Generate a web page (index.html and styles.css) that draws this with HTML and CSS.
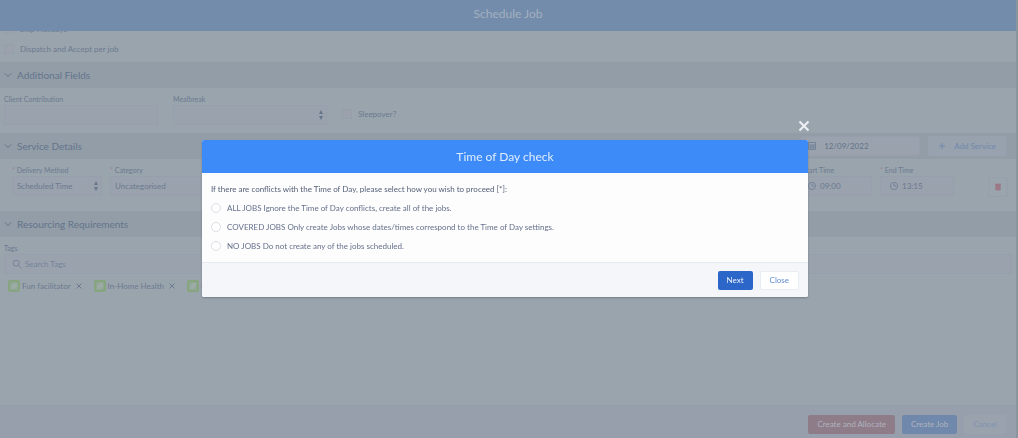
FILE: index.html
```html
<!DOCTYPE html>
<html lang="en">
<head>
<meta charset="utf-8">
<title>Schedule Job</title>
<link rel="stylesheet" href="styles.css">
</head>
<body>
<div class="page">
  <header class="page-header"><h1>Schedule Job</h1></header>
  <main class="content">
    <div class="options">
      <label class="check"><input type="checkbox">Skip Holidays</label>
      <label class="check"><input type="checkbox">Dispatch and Accept per job</label>
    </div>

    <div class="section-bar">
      <svg class="chevron" viewBox="0 0 8 8"><path d="M1 2.5l3 3 3-3"/></svg>
      <h2>Additional Fields</h2>
    </div>
    <div class="fields extra">
      <div class="field wide"><label for="contribution">Client Contribution</label><input id="contribution" class="control" type="text"></div>
      <div class="field wide"><label for="mealbreak">Mealbreak</label>
        <div class="select"><select id="mealbreak" class="control"><option></option></select><svg class="sort" viewBox="0 0 4 10"><path d="M2 0l2 4H0zM2 10l2-4H0z"/></svg></div>
      </div>
      <label class="check sleepover"><input type="checkbox">Sleepover?</label>
    </div>

    <div class="section-bar">
      <svg class="chevron" viewBox="0 0 8 8"><path d="M1 2.5l3 3 3-3"/></svg>
      <h2>Service Details</h2>
      <div class="tools">
        <div class="icon-input date">
          <svg viewBox="0 0 10 10"><path d="M1.500 1.500h7v7h-7zM1.500 4h7M1.500 6.200h7M3.800 4v4.500M6.200 4v4.500"/></svg>
          <input type="text" value="12/09/2022" aria-label="Service date">
        </div>
        <button class="add" type="button"><svg viewBox="0 0 8 8"><path d="M4 1v6M1 4h6"/></svg>Add Service</button>
      </div>
    </div>
    <div class="fields service">
      <div class="field method"><label for="method"><i>*</i> Delivery Method</label>
        <div class="select"><select id="method" class="control"><option>Scheduled Time</option></select><svg class="sort" viewBox="0 0 4 10"><path d="M2 0l2 4H0zM2 10l2-4H0z"/></svg></div>
      </div>
      <div class="field category"><label for="category"><i>*</i> Category</label><input id="category" class="control" type="text" value="Uncategorised"></div>
      <div class="field time"><label for="start"><i>*</i> Start Time</label>
        <div class="icon-input"><svg viewBox="0 0 10 10"><circle cx="5" cy="5" r="3.600"/><path d="M5 2.800V5h2"/></svg><input id="start" type="text" value="09:00"></div>
      </div>
      <div class="field time"><label for="end"><i>*</i> End Time</label>
        <div class="icon-input"><svg viewBox="0 0 10 10"><circle cx="5" cy="5" r="3.600"/><path d="M5 2.800V5h2"/></svg><input id="end" type="text" value="13:15"></div>
      </div>
      <button class="delete" type="button" aria-label="Delete service"><svg viewBox="0 0 8 10"><path d="M1 2h6v7H1zM0.500 1h7v1h-7z"/></svg></button>
    </div>

    <div class="section-bar">
      <svg class="chevron" viewBox="0 0 8 8"><path d="M1 2.500l3 3 3-3"/></svg>
      <h2>Resourcing Requirements</h2>
    </div>
    <div class="tags">
      <label for="tags">Tags</label>
      <div class="icon-input search"><svg viewBox="0 0 10 10"><circle cx="4.200" cy="4.200" r="3"/><path d="M6.500 6.500L9.500 9.500"/></svg><input id="tags" type="text" placeholder="Search Tags"></div>
      <div class="chips">
        <span class="chip"><svg class="tag" viewBox="0 0 12 12"><rect x="1" y="1" width="10" height="10" rx="1"/><path d="M3 5.500L5.500 3H9v3.500L6.500 9H3z"/></svg>Fun facilitator<button type="button" aria-label="Remove Fun facilitator"><svg viewBox="0 0 6 6"><path d="M.5.5l5 5M5.500.5l-5 5"/></svg></button></span>
        <span class="chip"><svg class="tag" viewBox="0 0 12 12"><rect x="1" y="1" width="10" height="10" rx="1"/><path d="M3 5.500L5.500 3H9v3.500L6.500 9H3z"/></svg>In-Home Health<button type="button" aria-label="Remove In-Home Health"><svg viewBox="0 0 6 6"><path d="M.5.5l5 5M5.500.5l-5 5"/></svg></button></span>
        <span class="chip"><svg class="tag" viewBox="0 0 12 12"><rect x="1" y="1" width="10" height="10" rx="1"/><path d="M3 5.500L5.500 3H9v3.500L6.500 9H3z"/></svg>First Aid</span>
      </div>
    </div>
  </main>
  <footer class="page-footer">
    <button class="allocate" type="button">Create and Allocate</button>
    <button class="create" type="button">Create Job</button>
    <button class="cancel" type="button">Cancel</button>
  </footer>
</div>

<div class="overlay">
  <form class="dialog" role="dialog" aria-labelledby="dialog-title">
    <button class="dismiss" type="button" aria-label="Close dialog"><svg viewBox="0 0 12 12"><path d="M1.500 1.500l9 9M10.500 1.500l-9 9"/></svg></button>
    <div class="dialog-header"><h2 id="dialog-title">Time of Day check</h2></div>
    <fieldset class="dialog-body">
      <legend>If there are conflicts with the Time of Day, please select how you wish to proceed [*]:</legend>
      <label><input type="radio" name="action">ALL JOBS Ignore the Time of Day conflicts, create all of the jobs.</label>
      <label><input type="radio" name="action">COVERED JOBS Only create Jobs whose dates/times correspond to the Time of Day settings.</label>
      <label><input type="radio" name="action">NO JOBS Do not create any of the jobs scheduled.</label>
    </fieldset>
    <div class="dialog-footer">
      <button class="next" type="button">Next</button>
      <button class="close" type="button">Close</button>
    </div>
  </form>
</div>
</body>
</html>
```
FILE: styles.css
```css
* { box-sizing: border-box; }
body { margin: 0; overflow: hidden; background: #9aa4ad; color: #6b7a8f; font-family: Lato, "Open Sans", sans-serif; font-size: 8px; line-height: 12px; }
h1, h2, fieldset, legend { margin: 0; padding: 0; border: 0; font-weight: 400; }
button, input, select { font: inherit; color: inherit; margin: 0; padding: 0; border: 0; background: transparent; }
svg { flex: none; fill: none; stroke: currentColor; stroke-width: 1; }

.page { display: flex; flex-direction: column; height: 100vh; border-right: 2px solid #8b959f; }
.page-header { flex: none; display: flex; align-items: center; justify-content: center; height: 31px; padding-bottom: 4px; background: #738cab; color: #a3b0c0; }
.page-header h1 { font-size: 12px; }
.content { flex: 1; min-height: 0; display: flex; flex-direction: column; justify-content: flex-start; overflow: hidden; }

.options { flex: none; display: flex; flex-direction: column; justify-content: flex-end; gap: 8px; height: 31px; padding: 0 4px 7px; overflow: hidden; }
.check { flex: none; display: flex; align-items: center; gap: 6px; }
.check input { appearance: none; width: 10px; height: 10px; border: 1px solid #969eaa; border-radius: 2px; background: #9ba2ad; }

.section-bar { flex: none; display: flex; align-items: center; gap: 5px; height: 26px; padding: 0 4px; background: #939da7; color: #62748b; }
.section-bar h2 { font-size: 10px; }
.chevron { width: 8px; height: 8px; }
.tools { display: flex; gap: 8px; height: 20px; margin-left: auto; padding-right: 6px; }

.fields { flex: none; display: flex; padding: 5px 4px 0; }
.extra { height: 45px; gap: 15px; }
.service { height: 52px; gap: 8px; padding-left: 12px; padding-right: 8px; }
.field { display: flex; flex-direction: column; }
.field > label, .tags > label { font-size: 7px; }
.field i { color: #a08390; font-style: normal; }
.wide { width: 154px; }
.method { width: 90px; }
.category { width: 160px; }
.time { width: 74px; }
.category + .time { margin-left: auto; }
.control, .icon-input { width: 100%; height: 20px; padding: 0 4px; border: 1px solid #969fab; border-radius: 2px; background: #9aa2ad; }
.select { display: flex; align-items: center; }
.select .control { appearance: none; }
.sort { width: 4px; height: 10px; margin-left: -8px; fill: #66768a; stroke: none; }
.sleepover { height: 14px; align-self: flex-end; margin-bottom: 12px; }
.icon-input { display: flex; align-items: center; gap: 3px; padding-left: 8px; }
.icon-input svg { width: 10px; height: 10px; stroke: #75849a; }
.icon-input input { flex: 1; min-width: 0; width: 0; }
.icon-input.date { width: 120px; padding-left: 6px; gap: 7px; }
.add { display: flex; align-items: center; gap: 8px; padding: 0 10px; border-radius: 2px; background: #98a2ae; color: #7189ac; }
.add svg { width: 8px; height: 8px; }
.delete { display: flex; align-items: center; justify-content: center; align-self: flex-start; width: 20px; height: 20px; margin: 13px 0 0 26px; border: 1px solid #969fab; border-radius: 2px; color: #9c7986; }
.delete svg { width: 6px; height: 8px; fill: currentColor; }

.tags { flex: none; display: flex; flex-direction: column; padding: 5px 4px 0; }
.search { padding-left: 7px; gap: 3px; }
.search input::placeholder { color: #74849a; opacity: 1; }
.chips { display: flex; gap: 4px; padding-top: 4px; }
.chip { display: flex; align-items: center; gap: 2px; height: 16px; padding: 0 4px; }
.chip .tag { width: 12px; height: 12px; fill: #8ea693; stroke: #86a57e; stroke-width: 2; }
.chip .tag path { fill: #9caba5; stroke: none; }
.chip button { display: flex; margin-left: 3px; }
.chip button svg { width: 6px; height: 6px; }

.page-footer { flex: none; display: flex; align-items: center; justify-content: flex-end; gap: 7px; height: 33px; padding: 4px 10px 0 0; border-top: 1px solid #949daa; background: #989fac; }
.page-footer button { height: 19px; padding: 0 9px; border-radius: 2px; color: #afb3bf; }
.page-footer .allocate { background: #8e7c88; }
.page-footer .create { background: #7088ab; }
.page-footer .cancel { background: #9aa2ae; color: #7e92b1; }

.overlay { position: fixed; inset: 0; display: flex; align-items: center; justify-content: center; padding-right: 8px; padding-bottom: 1px; }
.dialog { position: relative; width: 60%; border-radius: 2px; background: #fdfdfe; box-shadow: 0 1px 2px #727d89; color: #65708a; }
.dismiss { position: absolute; right: -2px; top: -20px; display: flex; color: #edf1f5; }
.dismiss svg { width: 12px; height: 12px; stroke-width: 2; }
.dialog-header { display: flex; align-items: center; justify-content: center; height: 33px; border-radius: 2px 2px 0 0; background: #3d8bf8; color: #dfecff; }
.dialog-header h2 { font-size: 12px; }
.dialog-body { display: flex; flex-direction: column; gap: 7px; padding: 0 9px 10px; }
.dialog-body legend { padding: 10px 0 7px; color: #535e76; }
.dialog-body label { display: flex; align-items: center; gap: 6px; }
.dialog-body input { appearance: none; width: 10px; height: 10px; border: 1px solid #dcdfe8; border-radius: 50%; background: #fff; }
.dialog-footer { display: flex; align-items: center; justify-content: flex-end; gap: 7px; height: 35px; padding: 0 9px; border-top: 1px solid #e6e9ef; border-radius: 0 0 2px 2px; background: #f4f6fa; }
.dialog-footer button { height: 19px; padding: 0 9px; border-radius: 2px; }
.dialog-footer .next { background: #2c66c8; color: #eef3fc; }
.dialog-footer .close { border: 1px solid #e9edf4; background: #fff; color: #608bd3; }
```
